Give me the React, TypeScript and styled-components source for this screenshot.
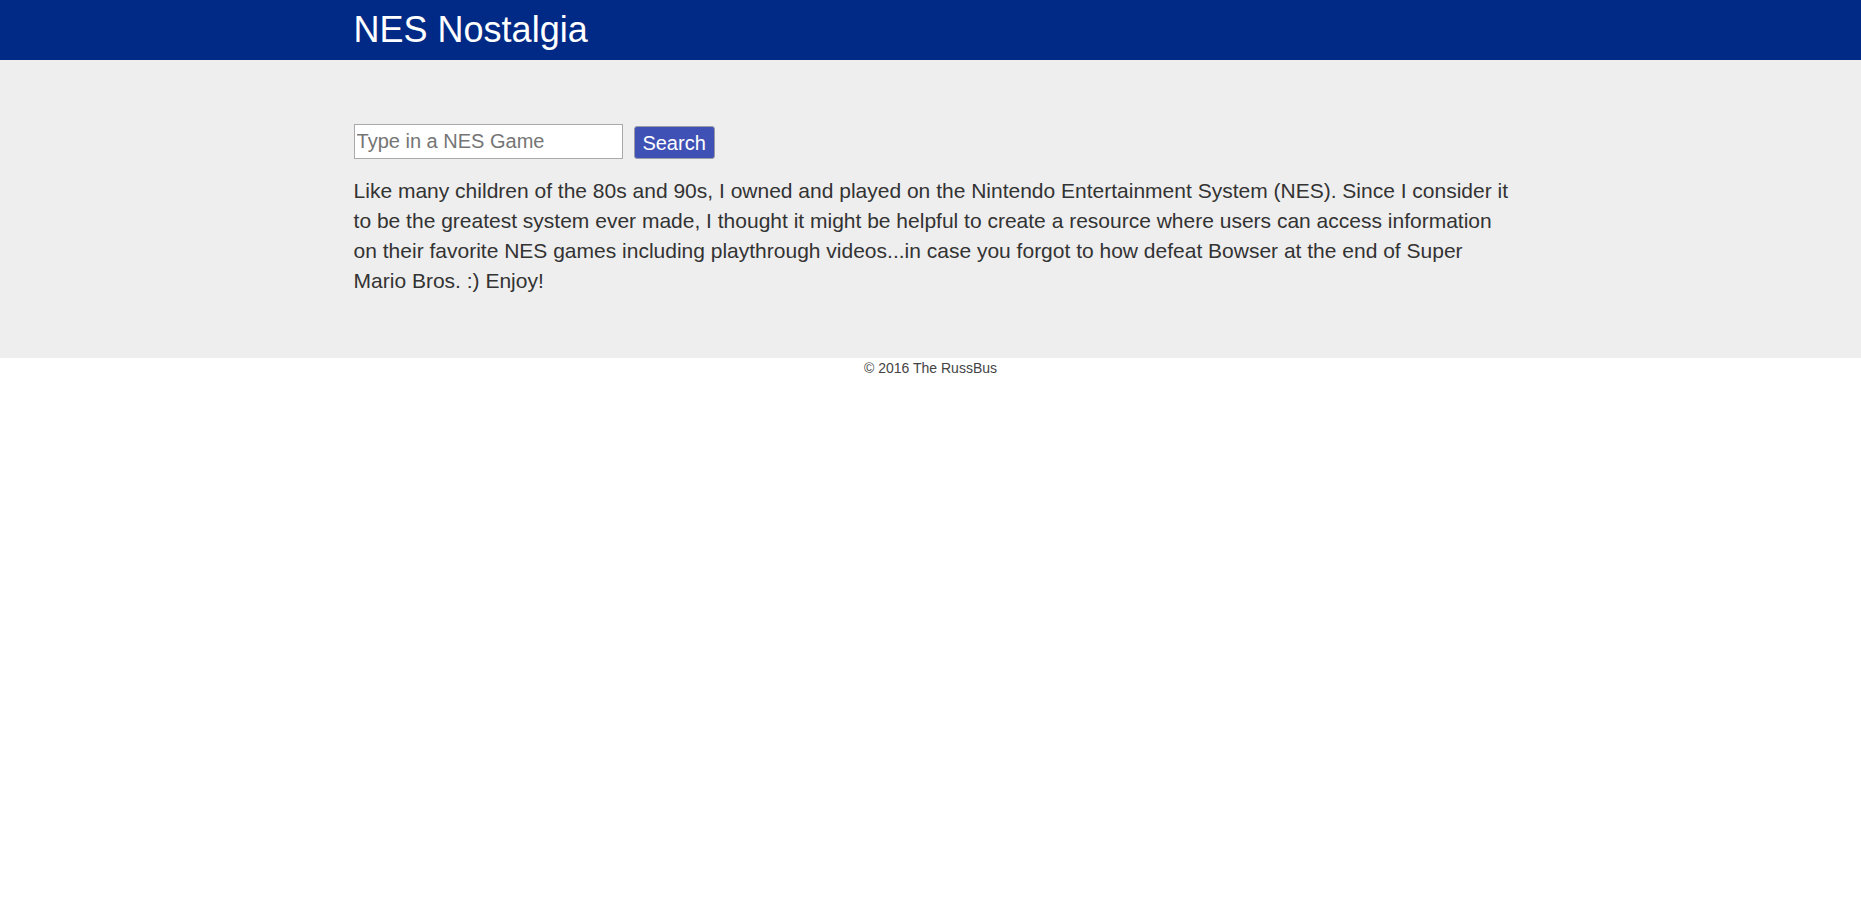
import React from "react";
import styled, { createGlobalStyle } from "styled-components";

const GlobalStyle = createGlobalStyle`
  html, body { margin: 0; padding: 0; background: #ffffff; }
  body { font-family: "Liberation Sans", Arial, Helvetica, sans-serif; color: #333333; }
  * { box-sizing: border-box; }
`;

const Header = styled.header`
  background: #002a86;
  height: 60px;
`;

const Container = styled.div`
  width: 62.4%;
  margin-left: 19%;
`;

const Title = styled.h1`
  margin: 0;
  font-size: 36px;
  font-weight: 400;
  line-height: 60px;
  color: #ffffff;
`;

const Main = styled.main`
  background: #eeeeee;
  padding: 64px 0 62px;
`;

const SearchForm = styled.form`
  display: flex;
  align-items: flex-end;
  gap: 11px;
  margin: 0 0 17px;
`;

const SearchInput = styled.input`
  width: 269px;
  height: 35px;
  padding: 0 2px;
  border: 1px solid #a9a9a9;
  background: #ffffff;
  font-family: "Liberation Sans", Arial, sans-serif;
  font-size: 20px;
  color: #333333;
  &::placeholder { color: #757575; }
`;

const SearchButton = styled.button`
  height: 33px;
  width: 81px;
  padding: 0;
  border: 1px solid #9a9aa8;
  border-radius: 3px;
  background: #3f51b5;
  color: #ffffff;
  font-family: "Liberation Sans", Arial, sans-serif;
  font-size: 20px;
  line-height: 1;
  cursor: pointer;
`;

const Intro = styled.p`
  margin: 0;
  font-size: 21px;
  line-height: 30px;
  color: #333333;
`;

const Footer = styled.footer`
  text-align: center;
  font-size: 14px;
  line-height: 20px;
  color: #444444;
`;

export default function App() {
  return (
    <>
      <GlobalStyle />
      <Header>
        <Container>
          <Title>NES Nostalgia</Title>
        </Container>
      </Header>
      <Main>
        <Container>
          <SearchForm onSubmit={(e) => e.preventDefault()}>
            <SearchInput type="text" placeholder="Type in a NES Game" />
            <SearchButton type="submit">Search</SearchButton>
          </SearchForm>
          <Intro>
            Like many children of the 80s and 90s, I owned and played on the Nintendo
            Entertainment System (NES). Since I consider it to be the greatest system ever
            made, I thought it might be helpful to create a resource where users can access
            information on their favorite NES games including playthrough videos...in case
            you forgot to how defeat Bowser at the end of Super Mario Bros. :) Enjoy!
          </Intro>
        </Container>
      </Main>
      <Footer>© 2016 The RussBus</Footer>
    </>
  );
}
